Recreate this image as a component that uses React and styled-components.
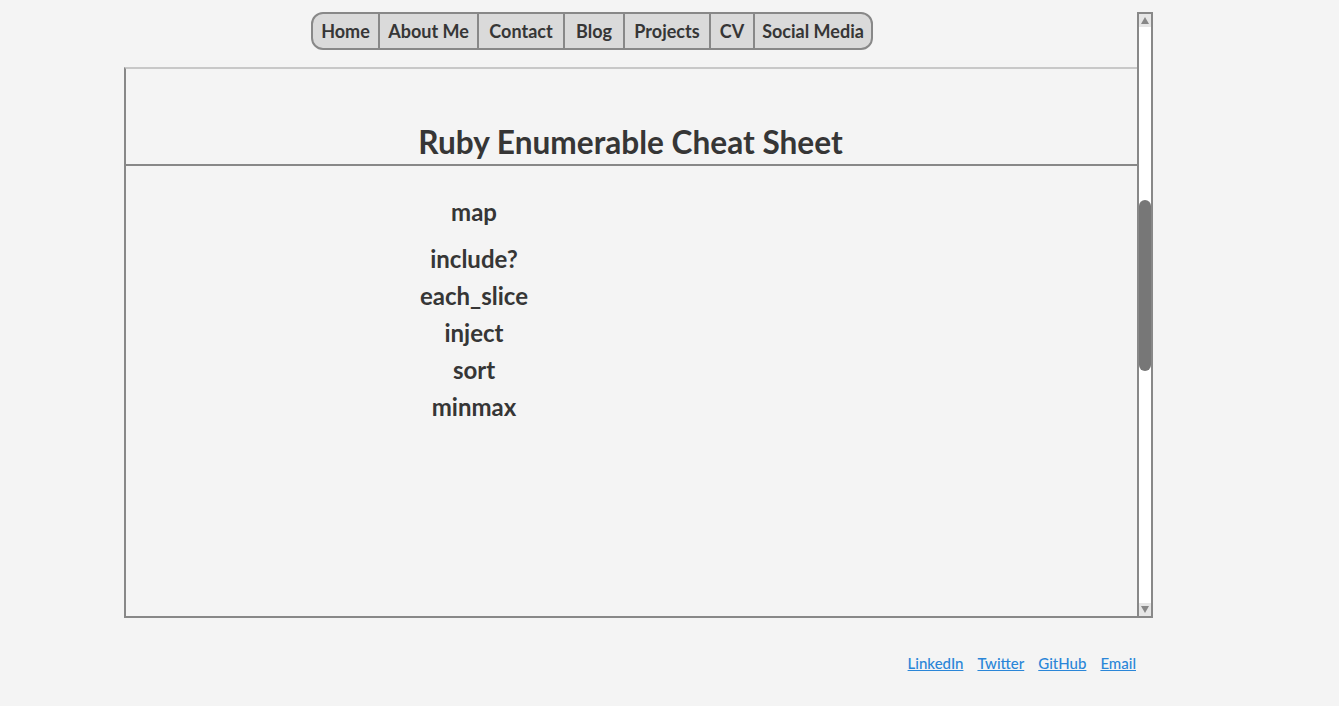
import React from "react";
import styled, { createGlobalStyle } from "styled-components";

const GlobalStyle = createGlobalStyle`
  html, body {
    margin: 0;
    padding: 0;
    background: #f4f4f4;
    font-family: Lato, "Open Sans", sans-serif;
    color: #363636;
  }
`;

const navItems = [
  { label: "Home", w: 65 },
  { label: "About Me", w: 99 },
  { label: "Contact", w: 86 },
  { label: "Blog", w: 60 },
  { label: "Projects", w: 86 },
  { label: "CV", w: 44 },
  { label: "Social Media", w: 118 },
];
const methods = ["map", "include?", "each_slice", "inject", "sort", "minmax"];
const links = ["LinkedIn", "Twitter", "GitHub", "Email"];

const App = () => {
  return (
    <Page>
      <GlobalStyle />
      <Frame>
        <Content>
          <NavRow>
            <Nav>
              {navItems.map((item) => (
                <NavItem key={item.label} href="#" $w={item.w}>
                  {item.label}
                </NavItem>
              ))}
            </Nav>
          </NavRow>

          <Sheet>
            <Header>
              <Title>Ruby Enumerable Cheat Sheet</Title>
            </Header>
            <MethodList>
              {methods.map((m, i) => (
                <Method key={m} $first={i === 0}>
                  {m}
                </Method>
              ))}
            </MethodList>
          </Sheet>
        </Content>

        {/* fake scrollbar */}
        <Scrollbar>
          <ScrollButton>
            <Arrow />
          </ScrollButton>
          <Track>
            <Thumb />
          </Track>
          <ScrollButton $down>
            <Arrow $down />
          </ScrollButton>
        </Scrollbar>
      </Frame>

      <Footer>
        {links.map((l) => (
          <FooterLink key={l} href="#">
            {l}
          </FooterLink>
        ))}
      </Footer>
    </Page>
  );
};

const Page = styled.div`
  padding-top: 12px;
  width: 1029px;
  margin-left: 124px;
`;

const Frame = styled.div`
  display: flex;
  height: 606px;
`;

const Content = styled.div`
  flex: 1;
  display: flex;
  flex-direction: column;
`;

const NavRow = styled.div`
  height: 55px;
  padding-left: 187px;
  display: flex;
  align-items: flex-start;
`;

const Nav = styled.nav`
  display: flex;
  height: 38px;
  box-sizing: border-box;
  border: 2px solid #888;
  border-radius: 12px;
  background: #dadada;
  overflow: hidden;
`;

const NavItem = styled.a`
  box-sizing: border-box;
  width: ${(p) => p.$w}px;
  display: flex;
  align-items: center;
  justify-content: center;
  font-size: 18px;
  font-weight: 700;
  color: #363636;
  text-decoration: none;
  & + & {
    border-left: 2px solid #888;
  }
`;

const Sheet = styled.section`
  flex: 1;
  border-top: 2px solid #c8c8c8;
  border-left: 2px solid #888;
  border-bottom: 2px solid #888;
  display: flex;
  flex-direction: column;
`;

const Header = styled.header`
  height: 95px;
  border-bottom: 2px solid #888;
  margin-left: -2px;
  display: flex;
  align-items: flex-end;
  justify-content: center;
`;

const Title = styled.h1`
  margin: 0 0 2px;
  font-size: 31.6px;
  font-weight: 700;
  line-height: 40px;
  color: #363636;
`;

const MethodList = styled.div`
  width: 696px;
  padding-top: 27px;
  display: flex;
  flex-direction: column;
  align-items: center;
`;

const Method = styled.div`
  font-size: 24px;
  font-weight: 700;
  line-height: 37px;
  margin-bottom: ${(p) => (p.$first ? "10px" : "0")};
`;

const Scrollbar = styled.div`
  width: 16px;
  box-sizing: border-box;
  border: 2px solid #888;
  display: flex;
  flex-direction: column;
  background: #fff;
`;

const ScrollButton = styled.div`
  height: 13px;
  background: #e6e6e6;
  display: flex;
  align-items: center;
  justify-content: center;
`;

const Arrow = styled.span`
  width: 0;
  height: 0;
  border-left: 4px solid transparent;
  border-right: 4px solid transparent;
  ${(p) =>
    p.$down ? "border-top: 7px solid #888;" : "border-bottom: 7px solid #888;"}
`;

const Track = styled.div`
  flex: 1;
  padding-top: 173px;
  display: flex;
  justify-content: center;
`;

const Thumb = styled.div`
  width: 12px;
  height: 171px;
  background: #777;
  border-radius: 6px;
`;

const Footer = styled.footer`
  display: flex;
  justify-content: flex-end;
  gap: 14px;
  padding: 36px 17px 0 0;
`;

const FooterLink = styled.a`
  font-size: 15px;
  color: #2a86d8;
  text-decoration: underline;
  font-weight: 500;
`;

export default App;
